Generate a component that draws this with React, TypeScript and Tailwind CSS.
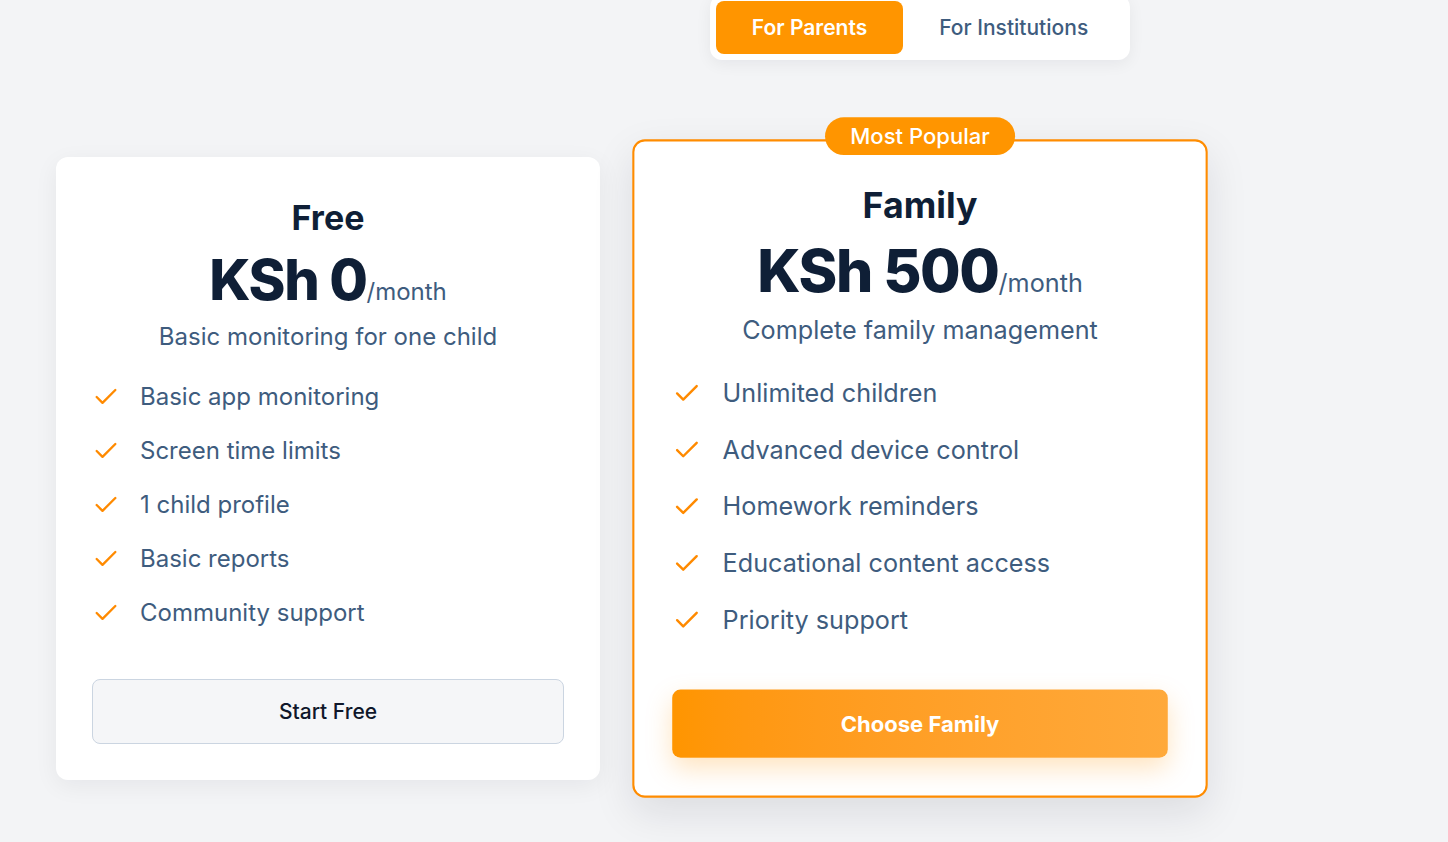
import { Check } from 'lucide-react'

const freeFeatures = [
  'Basic app monitoring',
  'Screen time limits',
  '1 child profile',
  'Basic reports',
  'Community support',
]

const familyFeatures = [
  'Unlimited children',
  'Advanced device control',
  'Homework reminders',
  'Educational content access',
  'Priority support',
]

function FeatureList({ items }: { items: string[] }) {
  return (
    <ul className="mt-[26px] flex flex-col gap-[18px]">
      {items.map((item) => (
        <li key={item} className="flex items-center gap-5 h-9">
          <Check className="w-7 h-7 shrink-0 text-[#ff8a00]" strokeWidth={2} />
          <span className="text-[24px] leading-9 text-[#3e5c7e]">{item}</span>
        </li>
      ))}
    </ul>
  )
}

function PlanHead({ name, price, desc }: { name: string; price: string; desc: string }) {
  return (
    <div className="flex flex-col items-center text-center">
      <h3 className="text-[34px] leading-[50px] font-bold text-[#0f1f36]">{name}</h3>
      <div className="mt-[9px] flex items-baseline">
        <span className="text-[56px] leading-none font-extrabold tracking-tight text-[#0f1f36]">{price}</span>
        <span className="text-[24px] text-[#3e5c7e]">/month</span>
      </div>
      <p className="mt-[11px] text-[24px] leading-8 text-[#3e5c7e]">{desc}</p>
    </div>
  )
}

export default function App() {
  return (
    <div className="w-full min-h-[842px] overflow-hidden bg-[#f3f4f6] font-['Inter',sans-serif]">
      <div className="w-[1840px]">
        {/* TOGGLE */}
        <div className="flex justify-center -mt-[5px]">
          <div className="flex p-1.5 bg-white rounded-xl shadow-[0_4px_16px_rgba(15,23,42,0.06)]">
            <button className="h-[53px] px-9 rounded-lg bg-[#ff9500] text-white text-[21px] font-semibold">
              For Parents
            </button>
            <button className="h-[53px] px-9 rounded-lg text-[#3e5c7e] text-[21px] font-medium">
              For Institutions
            </button>
          </div>
        </div>

        {/* PLANS */}
        <div className="mt-[95px] pl-14 flex items-center">
          <div className="w-[544px] bg-white rounded-xl p-9 shadow-[0_6px_24px_rgba(15,23,42,0.06)]">
            <PlanHead name="Free" price="KSh 0" desc="Basic monitoring for one child" />
            <FeatureList items={freeFeatures} />
            <button className="mt-[48px] w-full h-[65px] rounded-lg border border-[#cbd5e1] bg-[#f5f6f8] text-[21px] font-medium text-[#0f172a]">
              Start Free
            </button>
          </div>

          <div className="relative ml-[46px] w-[548px] bg-white rounded-xl border-2 border-[#ff8c00] p-9 scale-105 shadow-[0_14px_40px_rgba(15,23,42,0.10)]">
            <div className="absolute left-1/2 -translate-x-1/2 -top-[23px] h-9 px-6 flex items-center rounded-full bg-[#ff9500] text-white text-[21px] font-medium whitespace-nowrap">
              Most Popular
            </div>
            <PlanHead name="Family" price="KSh 500" desc="Complete family management" />
            <FeatureList items={familyFeatures} />
            <button className="mt-[48px] w-full h-[65px] rounded-lg bg-gradient-to-r from-[#ff9500] to-[#ffa93a] text-white text-[21px] font-bold shadow-[0_10px_24px_rgba(255,149,0,0.25)]">
              Choose Family
            </button>
          </div>
        </div>
      </div>
    </div>
  )
}
